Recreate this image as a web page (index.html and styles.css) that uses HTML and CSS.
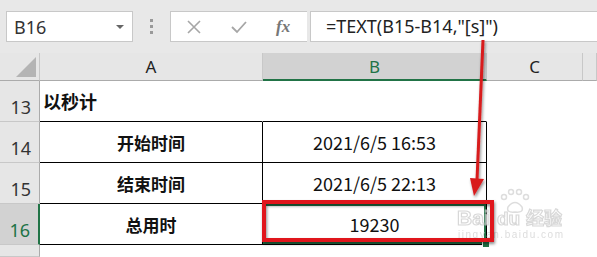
FILE: index.html
```html
<!DOCTYPE html>
<html>
<head>
  <title>以秒计</title>
  <meta charset="utf-8">
  <link rel="stylesheet" href="styles.css">
</head>
<body>
  <div class="page">
    <div class="toolbar">
      <div class="namebox">
        <span>B16</span>
        <span class="caret"></span>
      </div>
      <div class="grip"><i></i><i></i><i></i></div>
      <div class="iconbox">
        <svg class="ico" width="16" height="16" viewBox="0 0 16 16"><path d="M2 2 L14 14 M14 2 L2 14" stroke="#a6a6a6" stroke-width="1.6" fill="none"/></svg>
        <svg class="ico" width="18" height="16" viewBox="0 0 18 16"><path d="M2 8 L7 13 L16 3" stroke="#a6a6a6" stroke-width="1.8" fill="none"/></svg>
        <span class="fx">fx</span>
      </div>
      <div class="formula">=TEXT(B15-B14,"[s]")</div>
    </div>

    <div class="sheet">
      <div class="corner"><span class="tri"></span></div>
      <div class="colhead">A</div>
      <div class="colhead active">B</div>
      <div class="colhead">C</div>
      <div class="colhead"></div>

      <div class="rowhead">13</div>
      <div class="cell title bline">以秒计</div>
      <div class="cell bline"></div>
      <div class="cell"></div>
      <div class="cell"></div>

      <div class="rowhead">14</div>
      <div class="cell label box">开始时间</div>
      <div class="cell value box">2021/6/5 16:53</div>
      <div class="cell"></div>
      <div class="cell"></div>

      <div class="rowhead">15</div>
      <div class="cell label box">结束时间</div>
      <div class="cell value box">2021/6/5 22:13</div>
      <div class="cell"></div>
      <div class="cell"></div>

      <div class="rowhead active">16</div>
      <div class="cell label box">总用时</div>
      <div class="cell value box selected">19230<span class="handle"></span></div>
      <div class="cell"></div>
      <div class="cell"></div>

      <div class="rowhead"></div>
      <div class="cell"></div>
      <div class="cell"></div>
      <div class="cell"></div>
      <div class="cell"></div>
    </div>

    <svg class="notes" width="597" height="257" viewBox="0 0 597 257">
      <defs>
        <filter id="shade" x="-10%" y="-10%" width="120%" height="130%">
          <feDropShadow dx="1" dy="2" stdDeviation="1.5" flood-color="#000" flood-opacity="0.45"/>
        </filter>
      </defs>
      <g class="mark" opacity="0.7">
        <g fill="none" stroke="#cfcfcf" stroke-width="1.5">
          <circle cx="504" cy="197" r="2.5"/>
          <circle cx="511" cy="192" r="2.5"/>
          <circle cx="519" cy="192" r="2.5"/>
          <circle cx="526" cy="197" r="2.5"/>
          <path d="M508 207 Q515 198 522 207 Q524 213 515 212 Q506 213 508 207 Z"/>
        </g>
        <g fill="#ffffff" stroke="#c8c8c8" stroke-width="1.2">
          <text x="457" y="225" font-size="21" font-family="Liberation Sans, sans-serif" font-weight="bold">Bai</text>
          <text x="497" y="225" font-size="19" font-family="Liberation Sans, sans-serif" font-weight="bold">du</text>
          <text x="526" y="225" font-size="18" font-family="Noto Sans CJK SC, sans-serif" font-weight="bold">经验</text>
        </g>
        <text x="458" y="238" font-size="10" fill="#cfcfcf" font-family="Liberation Sans, sans-serif" textLength="105">jingyan.baidu.com</text>
      </g>
      <g filter="url(#shade)">
        <rect x="264" y="202" width="228" height="38" fill="none" stroke="#e0191c" stroke-width="4"/>
        <path d="M483 40 L477 180" stroke="#d81b1f" stroke-width="3" fill="none"/>
        <path d="M470 178 L484 179 L474 196 Z" fill="#d81b1f"/>
      </g>
    </svg>
  </div>
</body>
</html>
```

FILE: styles.css
```css
body {
  margin: 0;
  font-family: "Noto Sans", "Noto Sans CJK SC", sans-serif;
  background: #fff;
}

.page {
  position: relative;
  width: 597px;
  height: 257px;
  overflow: hidden;
}

.toolbar {
  display: flex;
  align-items: center;
  height: 53px;
  padding: 0 0 0 6px;
  box-sizing: border-box;
  background: #e8e8e8;
}

.namebox {
  display: flex;
  align-items: center;
  justify-content: space-between;
  width: 127px;
  height: 31px;
  padding: 0 8px 0 7px;
  box-sizing: border-box;
  background: #fff;
  border: 1px solid #c8c8c8;
  font-size: 18px;
  color: #333;
}

.caret {
  width: 0;
  height: 0;
  border-left: 4px solid transparent;
  border-right: 4px solid transparent;
  border-top: 4px solid #666;
}

.grip {
  display: flex;
  flex-direction: column;
  gap: 3px;
  margin: 0 17px 0 17px;
}

.grip i {
  width: 3px;
  height: 3px;
  background: #999;
}

.iconbox {
  display: flex;
  align-items: center;
  gap: 28px;
  width: 137px;
  height: 31px;
  padding-left: 15px;
  box-sizing: border-box;
  background: #fff;
  border: 1px solid #c8c8c8;
  border-right: none;
}

.fx {
  font-family: "Liberation Serif", serif;
  font-style: italic;
  font-weight: bold;
  font-size: 17px;
  color: #777;
}

.formula {
  flex: 1;
  height: 31px;
  margin-left: 3px;
  padding-left: 15px;
  box-sizing: border-box;
  background: #fff;
  border: 1px solid #c8c8c8;
  border-right: none;
  font-size: 18px;
  line-height: 29px;
  color: #222;
}

.sheet {
  display: grid;
  grid-template-columns: 40px 223px 224px 96px 1fr;
  grid-template-rows: 28px 41px 41px 41px 41px 1fr;
  height: 204px;
}

.corner {
  position: relative;
  background: #e6e6e6;
  border-right: 1px solid #c8c8c8;
  border-bottom: 1px solid #ababab;
}

.tri {
  position: absolute;
  right: 3px;
  bottom: 3px;
  width: 0;
  height: 0;
  border-left: 20px solid transparent;
  border-bottom: 20px solid #b4b4b4;
}

.colhead {
  display: flex;
  align-items: center;
  justify-content: center;
  background: #e6e6e6;
  border-right: 1px solid #c8c8c8;
  border-bottom: 1px solid #ababab;
  font-size: 17px;
  color: #222;
}

.colhead.active {
  background: #d2d2d2;
  color: #217346;
  border-bottom: 2px solid #217346;
}

.rowhead {
  display: flex;
  align-items: flex-end;
  justify-content: flex-end;
  padding: 0 8px 2px 0;
  background: #e6e6e6;
  border-right: 1px solid #ababab;
  border-bottom: 1px solid #c8c8c8;
  font-size: 18px;
  color: #333;
}

.rowhead.active {
  background: #d2d2d2;
  color: #217346;
  border-right: 2px solid #217346;
}

/* gridlines are switched off, only the table has borders */
.cell {
  display: flex;
  align-items: center;
  border-right: 1px solid transparent;
  border-bottom: 1px solid transparent;
  font-family: "Noto Sans CJK SC", sans-serif;
  font-size: 17px;
  color: #111;
}

.cell.bline {
  border-bottom-color: #000;
}

.cell.box {
  justify-content: center;
  border-right-color: #000;
  border-bottom-color: #000;
}

.cell.title {
  padding-left: 3px;
  font-weight: bold;
  font-size: 18px;
}

.cell.label {
  font-weight: bold;
}

.cell.value {
  font-size: 18px;
}

.cell.selected {
  position: relative;
  box-shadow: inset 0 0 0 2px #217346;
}

.handle {
  position: absolute;
  right: -4px;
  bottom: -4px;
  width: 6px;
  height: 6px;
  background: #217346;
  border: 1px solid #fff;
}

.notes {
  position: absolute;
  left: 0;
  top: 0;
  pointer-events: none;
}
```
